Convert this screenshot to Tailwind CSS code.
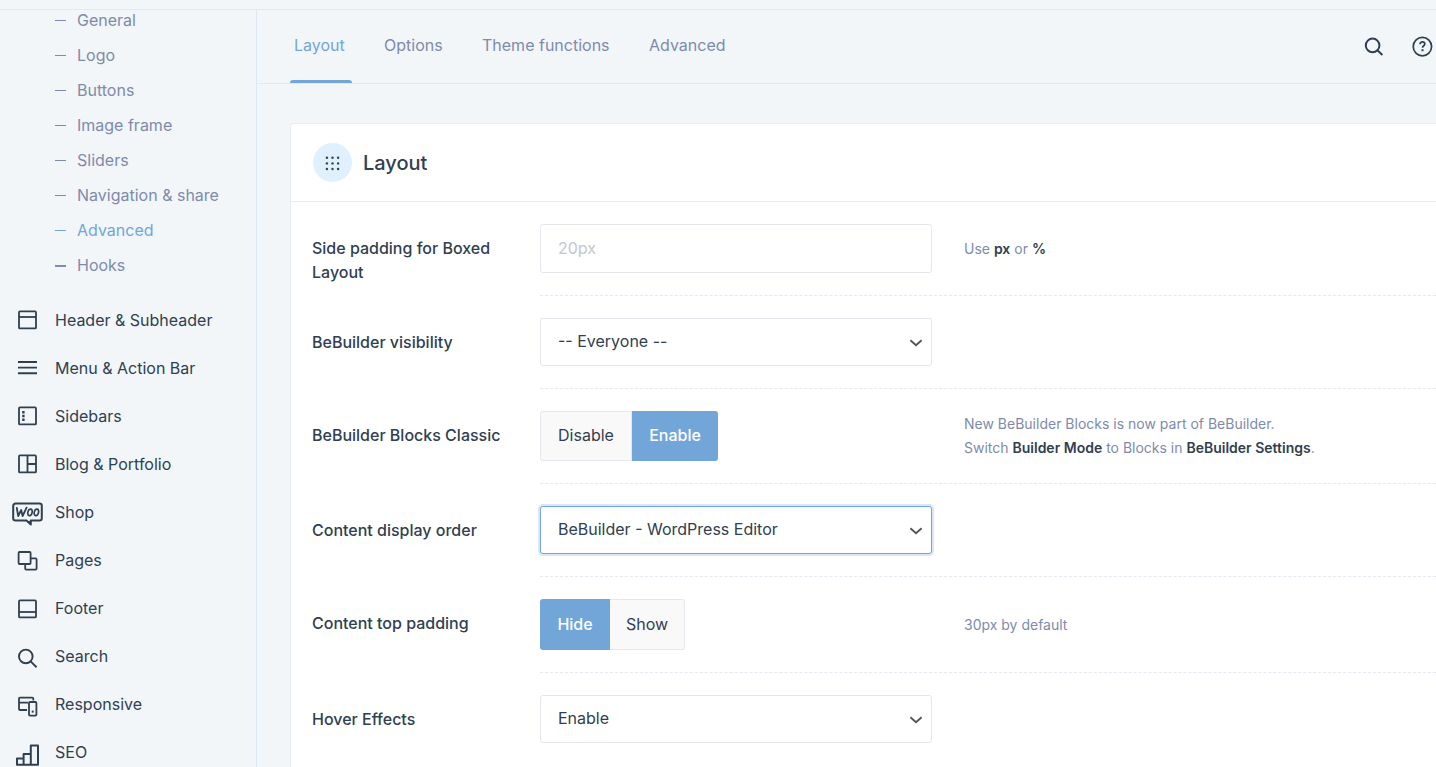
<!DOCTYPE html>
<html lang="en">
<head>
<meta charset="utf-8">
<meta name="viewport" content="width=device-width, initial-scale=1">
<title>Theme options</title>
<script src="https://cdn.jsdelivr.net/npm/@tailwindcss/browser@4"></script>
</head>
<body class="flex h-screen flex-col overflow-hidden bg-[#f2f6f9] pt-[9px] font-['Inter','Noto_Sans',sans-serif] text-base text-[#304050]">
<div class="flex min-h-0 flex-1 overflow-hidden border-t border-[#e4e9ef]">

  <!-- Sidebar -->
  <nav aria-label="Theme options" class="w-[257px] shrink-0 overflow-hidden border-r border-[#dfe7ef]">
    <ul class="-mt-2 pl-[55px] text-[#7e8bab]">
      <li><a href="#" class="flex h-[35px] items-center gap-[11px]"><span class="mt-0.5 h-px w-[11px] bg-current"></span>General</a></li>
      <li><a href="#" class="flex h-[35px] items-center gap-[11px]"><span class="mt-0.5 h-px w-[11px] bg-current"></span>Logo</a></li>
      <li><a href="#" class="flex h-[35px] items-center gap-[11px]"><span class="mt-0.5 h-px w-[11px] bg-current"></span>Buttons</a></li>
      <li><a href="#" class="flex h-[35px] items-center gap-[11px]"><span class="mt-0.5 h-px w-[11px] bg-current"></span>Image frame</a></li>
      <li><a href="#" class="flex h-[35px] items-center gap-[11px]"><span class="mt-0.5 h-px w-[11px] bg-current"></span>Sliders</a></li>
      <li><a href="#" class="flex h-[35px] items-center gap-[11px]"><span class="mt-0.5 h-px w-[11px] bg-current"></span>Navigation &amp; share</a></li>
      <li><a href="#" aria-current="page" class="flex h-[35px] items-center gap-[11px] text-[#72a5d8]"><span class="mt-0.5 h-px w-[11px] bg-current"></span>Advanced</a></li>
      <li><a href="#" class="flex h-[35px] items-center gap-[11px]"><span class="mt-0.5 h-0.5 w-[11px] bg-current"></span>Hooks</a></li>
    </ul>
    <ul class="mt-3.5 pl-3">
      <li><a href="#" class="flex h-12 items-center gap-3">
        <svg class="h-6 w-[31px]" viewBox="0 0 31 24" fill="none" stroke="currentColor" stroke-width="1.8" stroke-linejoin="round" aria-hidden="true"><rect x="7" y="3.4" width="17" height="17" rx="1"/><path d="M7 9h17"/></svg>Header &amp; Subheader</a></li>
      <li><a href="#" class="flex h-12 items-center gap-3">
        <svg class="h-6 w-[31px]" viewBox="0 0 31 24" fill="none" stroke="currentColor" stroke-width="1.9" aria-hidden="true"><path d="M6 6h19M6 11.6h19M6 17.2h19"/></svg>Menu &amp; Action Bar</a></li>
      <li><a href="#" class="flex h-12 items-center gap-3">
        <svg class="h-6 w-[31px]" viewBox="0 0 31 24" fill="none" stroke="currentColor" stroke-width="1.8" stroke-linejoin="round" aria-hidden="true"><rect x="7" y="3.4" width="17" height="17" rx="1"/><path d="M11.4 7v10" stroke-width="2.4" stroke-dasharray="2.4 1.4"/></svg>Sidebars</a></li>
      <li><a href="#" class="flex h-12 items-center gap-3">
        <svg class="h-6 w-[31px]" viewBox="0 0 31 24" fill="none" stroke="currentColor" stroke-width="1.8" stroke-linejoin="round" aria-hidden="true"><rect x="7" y="3.4" width="17" height="17" rx="1"/><path d="M15.5 3.4v17M15.5 12H24"/></svg>Blog &amp; Portfolio</a></li>
      <li><a href="#" class="flex h-12 items-center gap-3">
        <svg class="h-6 w-[31px] overflow-visible" viewBox="0 -2 31 24" fill="none" stroke="currentColor" stroke-width="2" stroke-linejoin="round" aria-hidden="true"><path d="M3.5 1.5h24a2.3 2.3 0 0 1 2.3 2.3v12.4a2.3 2.3 0 0 1-2.3 2.3h-8.7v4l-4.3-4h-11a2.3 2.3 0 0 1-2.3-2.3V3.8a2.3 2.3 0 0 1 2.3-2.3z"/><path d="M15 19h4v4z" fill="currentColor" stroke="none"/><path d="M4.8 6l1.4 8 3-6 1.4 6 4-8.4" stroke-width="1.8" stroke-linecap="round"/><ellipse cx="18" cy="10.4" rx="2.1" ry="3.3" transform="rotate(14 18 10.4)" stroke-width="1.7"/><ellipse cx="24.4" cy="10.4" rx="2.1" ry="3.3" transform="rotate(14 24.4 10.4)" stroke-width="1.7"/></svg>Shop</a></li>
      <li><a href="#" class="flex h-12 items-center gap-3">
        <svg class="h-6 w-[31px] overflow-visible" viewBox="0 -1 31 24" fill="none" stroke="currentColor" stroke-width="1.8" stroke-linejoin="round" aria-hidden="true"><rect x="6.6" y="3" width="12" height="12" rx="1"/><path d="M18.6 9.4h5a1 1 0 0 1 1 1v9.2a1 1 0 0 1-1 1h-9.4a1 1 0 0 1-1-1V15"/></svg>Pages</a></li>
      <li><a href="#" class="flex h-12 items-center gap-3">
        <svg class="h-6 w-[31px] overflow-visible" viewBox="0 -1 31 24" fill="none" stroke="currentColor" stroke-width="1.8" stroke-linejoin="round" aria-hidden="true"><rect x="7" y="3.4" width="17" height="17" rx="1"/><path d="M7 15h17"/></svg>Footer</a></li>
      <li><a href="#" class="flex h-12 items-center gap-3">
        <svg class="h-6 w-[31px] overflow-visible" viewBox="0 -2 31 24" fill="none" stroke="currentColor" stroke-width="1.9" aria-hidden="true"><circle cx="13.8" cy="10.4" r="6.8"/><path d="M18.6 15.4l6 5.8"/></svg>Search</a></li>
      <li><a href="#" class="flex h-12 items-center gap-3">
        <svg class="h-6 w-[31px] overflow-visible" viewBox="0 -2 31 24" fill="none" stroke="currentColor" stroke-width="1.8" stroke-linejoin="round" aria-hidden="true"><path d="M21.3 6.4V4.6a1 1 0 0 0-1-1H8a1 1 0 0 0-1 1V15a1 1 0 0 0 1 1h7M7 8.6h9"/><rect x="17" y="8" width="7.4" height="13.6" rx="1"/><path d="M19.7 17.6h2" stroke-width="2"/></svg>Responsive</a></li>
      <li><a href="#" class="flex h-12 items-center gap-3">
        <svg class="h-6 w-[31px] overflow-visible" viewBox="0 -2 31 24" fill="none" stroke="currentColor" stroke-width="2" stroke-linejoin="round" aria-hidden="true"><path d="M5 16.4h6.6v6.4H5zM11.6 12h7.2v10.8h-7.2zM18.8 3.4H26v19.4h-7.2z"/></svg>SEO</a></li>
    </ul>
  </nav>

  <!-- Content -->
  <main class="flex min-w-0 flex-1 flex-col">
    <header class="flex h-[74px] shrink-0 items-stretch justify-between border-b border-[#e4e9ef] pr-[3px] pl-[37px]">
      <nav aria-label="Section" class="flex gap-[38px] pb-[3px] text-[#7e8bab]">
        <a href="#" aria-current="page" class="relative flex w-[52px] items-center text-[#72a5d8] after:absolute after:-right-1.5 after:-bottom-[3px] after:-left-1 after:h-[3px] after:rounded-t-sm after:bg-[#72a5d8]">Layout</a>
        <a href="#" class="flex w-[60px] items-center">Options</a>
        <a href="#" class="flex w-[129px] items-center whitespace-nowrap">Theme functions</a>
        <a href="#" class="flex items-center">Advanced</a>
      </nav>
      <div class="flex items-center gap-[26px]">
        <button type="button" aria-label="Search"><svg class="h-[22px] w-[22px]" viewBox="0 0 22 22" fill="none" stroke="currentColor" stroke-width="2" aria-hidden="true"><circle cx="9.6" cy="9.4" r="6.8"/><path d="M14.4 14.2l5 4.8"/></svg></button>
        <button type="button" aria-label="Help"><svg class="h-[22px] w-[22px]" viewBox="0 0 22 22" fill="none" stroke="currentColor" stroke-width="1.7" aria-hidden="true"><circle cx="11.4" cy="10.6" r="9.2"/><path d="M9 8.2c0-1.4 1-2.3 2.4-2.3s2.4.9 2.4 2.1c0 1.7-2.3 1.8-2.3 3.8"/><path d="M11.5 13.2v2" stroke-width="2"/></svg></button>
      </div>
    </header>

    <section class="mt-[39px] ml-[33px] flex-1 rounded-tl border-t border-l border-[#e9edf2] bg-white">
      <div class="flex h-[78px] items-center gap-[11px] border-b border-[#e9edf2] pl-[22px]">
        <span class="flex h-[39px] w-[39px] items-center justify-center rounded-full bg-[#e1f0ff]">
          <svg class="h-4 w-4" viewBox="0 0 16 16" fill="currentColor" aria-hidden="true"><circle cx="1.9" cy="2.8" r="1.2"/><circle cx="7.5" cy="2.8" r="1.2"/><circle cx="13.1" cy="2.8" r="1.2"/><circle cx="1.9" cy="8.4" r="1.2"/><circle cx="7.5" cy="8.4" r="1.2"/><circle cx="13.1" cy="8.4" r="1.2"/><circle cx="1.9" cy="14" r="1.2"/><circle cx="7.5" cy="14" r="1.2"/><circle cx="13.1" cy="14" r="1.2"/></svg>
        </span>
        <h2 class="text-xl font-medium">Layout</h2>
      </div>

      <form class="pl-[21px]">
        <div class="flex">
          <label for="side-padding" class="w-[228px] shrink-0 pt-[34px] pr-8 leading-6 font-medium">Side padding for Boxed Layout</label>
          <div class="flex flex-1 items-center gap-8 border-b border-dashed border-[#e4e9ef] py-[22px]">
            <input id="side-padding" type="text" placeholder="20px" class="h-[49px] w-[392px] rounded-[3px] border border-[#e4e7ec] bg-white px-[17px] pb-0.5 outline-none placeholder:text-[#c3c7cc]">
            <p class="text-sm leading-6 text-[#7e8bab]">Use <strong class="font-semibold text-[#304050]">px</strong> or <strong class="font-semibold text-[#304050]">%</strong></p>
          </div>
        </div>

        <div class="flex">
          <label for="visibility" class="w-[228px] shrink-0 pt-[34px] leading-6 font-medium">BeBuilder visibility</label>
          <div class="flex flex-1 items-center border-b border-dashed border-[#e4e9ef] py-[22px]">
            <div class="relative">
              <select id="visibility" class="block h-12 w-[392px] appearance-none rounded-[3px] border border-[#e4e7ec] bg-white px-[17px] pb-0.5 outline-none"><option>-- Everyone --</option></select>
              <svg class="pointer-events-none absolute top-[21px] right-[9px] h-2 w-[14px]" viewBox="0 0 14 8" fill="none" stroke="#555" stroke-width="1.9" aria-hidden="true"><path d="M1.4 1.2L7 6.2l5.6-5"/></svg>
            </div>
          </div>
        </div>

        <div class="flex">
          <span id="blocks-label" class="w-[228px] shrink-0 pt-[34px] leading-6 font-medium">BeBuilder Blocks Classic</span>
          <div class="flex flex-1 items-center gap-8 border-b border-dashed border-[#e4e9ef] py-[22px]">
            <div role="group" aria-labelledby="blocks-label" class="flex h-[50px] w-[392px]">
              <button type="button" aria-pressed="false" class="w-[92px] rounded-l-[3px] border border-[#e4e7ec] bg-[#f9f9f9] pb-0.5">Disable</button>
              <button type="button" aria-pressed="true" class="w-[86px] rounded-r-[3px] bg-[#72a5d8] pb-0.5 font-medium text-white">Enable</button>
            </div>
            <p class="text-sm leading-6 text-[#7e8bab]">New BeBuilder Blocks is now part of BeBuilder.<br>Switch <strong class="font-semibold text-[#304050]">Builder Mode</strong> to Blocks in <strong class="font-semibold text-[#304050]">BeBuilder Settings</strong>.</p>
          </div>
        </div>

        <div class="flex">
          <label for="order" class="w-[228px] shrink-0 pt-[34px] leading-6 font-medium">Content display order</label>
          <div class="flex flex-1 items-center border-b border-dashed border-[#e4e9ef] py-[22px]">
            <div class="relative">
              <select id="order" class="block h-12 w-[392px] appearance-none rounded-[3px] border border-[#72a5d8] bg-white px-[17px] pb-0.5 ring-2 ring-[#d9e6f5] outline-none"><option>BeBuilder - WordPress Editor</option></select>
              <svg class="pointer-events-none absolute top-[21px] right-[9px] h-2 w-[14px]" viewBox="0 0 14 8" fill="none" stroke="#555" stroke-width="1.9" aria-hidden="true"><path d="M1.4 1.2L7 6.2l5.6-5"/></svg>
            </div>
          </div>
        </div>

        <div class="flex">
          <span id="padding-label" class="w-[228px] shrink-0 pt-[34px] leading-6 font-medium">Content top padding</span>
          <div class="flex flex-1 items-center gap-8 border-b border-dashed border-[#e4e9ef] py-[22px]">
            <div role="group" aria-labelledby="padding-label" class="flex h-[51px] w-[392px]">
              <button type="button" aria-pressed="true" class="w-[70px] rounded-l-[3px] bg-[#72a5d8] pb-0.5 font-medium text-white">Hide</button>
              <button type="button" aria-pressed="false" class="w-[75px] rounded-r-[3px] border border-l-0 border-[#e4e7ec] bg-[#f9f9f9] pb-0.5">Show</button>
            </div>
            <p class="text-sm leading-6 text-[#7e8bab]">30px by default</p>
          </div>
        </div>

        <div class="flex">
          <label for="hover" class="w-[228px] shrink-0 pt-[34px] leading-6 font-medium">Hover Effects</label>
          <div class="flex flex-1 items-center py-[22px]">
            <div class="relative">
              <select id="hover" class="block h-12 w-[392px] appearance-none rounded-[3px] border border-[#e4e7ec] bg-white px-[17px] pb-0.5 outline-none"><option>Enable</option></select>
              <svg class="pointer-events-none absolute top-[21px] right-[9px] h-2 w-[14px]" viewBox="0 0 14 8" fill="none" stroke="#555" stroke-width="1.9" aria-hidden="true"><path d="M1.4 1.2L7 6.2l5.6-5"/></svg>
            </div>
          </div>
        </div>
      </form>
    </section>
  </main>
</div>
</body>
</html>
